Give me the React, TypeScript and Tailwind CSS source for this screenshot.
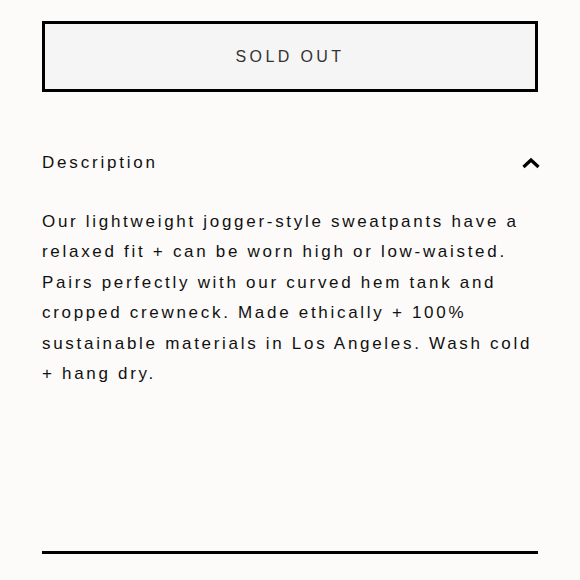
export default function App() {
  return (
    <div className="min-h-screen w-full bg-[#fcfbf9] px-[42px] pt-[21px] font-['Liberation_Sans',Arial,sans-serif]">
      {/* Sold out button */}
      <button
        type="button"
        disabled
        className="flex h-[71px] w-full items-center justify-center border-[3px] border-black bg-[#f5f5f5] text-[16px] tracking-[3.4px] text-[#333]"
      >
        SOLD OUT
      </button>

      {/* Description accordion */}
      <div className="mt-[58px] flex items-center justify-between">
        <h2 className="text-[17px] tracking-[2.8px] text-[#111]">Description</h2>
        <svg width="20" height="12" viewBox="0 0 20 12" className="mr-[-3px]">
          <path d="M2.5 10 L10 3 L17.5 10" fill="none" stroke="#000" strokeWidth="3.2" />
        </svg>
      </div>

      <p className="mt-[31px] text-[17px] leading-[30.6px] tracking-[2.7px] text-[#111]">
        Our lightweight jogger-style sweatpants have a relaxed fit + can be worn high or low-waisted.
        Pairs perfectly with our curved hem tank and cropped crewneck. Made ethically + 100%
        sustainable materials in Los Angeles. Wash cold + hang dry.
      </p>

      <div className="mt-[161px] h-[3px] w-full bg-black" />
    </div>
  );
}
